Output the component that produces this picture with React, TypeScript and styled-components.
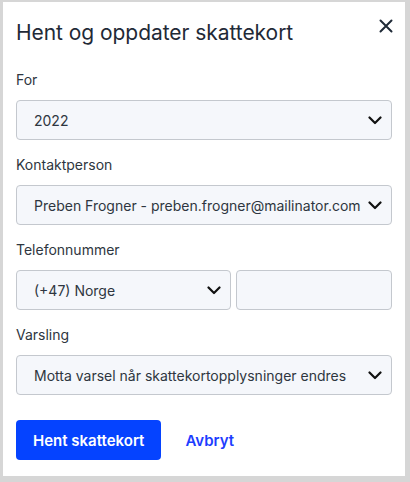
import React from "react";
import styled, { createGlobalStyle } from "styled-components";

const Global = createGlobalStyle`
  html, body { margin: 0; padding: 0; background: #d6d6d6; }
  body { font-family: Inter, "Noto Sans", sans-serif; }
  * { box-sizing: border-box; }
`;

const Frame = styled.div`
  width: 410px;
  height: 482px;
  padding: 2px 5px 6px 3px;
  background: #d6d6d6;
`;

const Card = styled.div`
  background: #fff;
  height: 100%;
  padding: 0 13px 0 13px;
  display: flex;
  flex-direction: column;
`;

const Header = styled.div`
  display: flex;
  justify-content: space-between;
  align-items: flex-start;
  padding-top: 18px;
`;

const Title = styled.h1`
  margin: 0;
  font-size: 21px;
  font-weight: 400;
  color: #1f2a37;
  line-height: 26px;
  letter-spacing: -0.05px;
`;

const Close = styled.button`
  border: none;
  background: none;
  padding: 0;
  margin: -6px -6px 0 0;
  width: 24px;
  height: 24px;
  display: flex;
  align-items: center;
  justify-content: center;
  color: #1f2a37;
  cursor: pointer;
`;

const Field = styled.div<{ $top: number }>`
  margin-top: ${(p) => p.$top}px;
  display: flex;
  flex-direction: column;
`;

const Label = styled.label`
  font-size: 14px;
  line-height: 18px;
  color: #2e3640;
  margin-bottom: 11px;
`;

const Box = styled.div<{ $w?: string }>`
  height: 40px;
  width: ${(p) => p.$w || "100%"};
  border: 1px solid #c4c8ce;
  border-radius: 4px;
  background: #f5f7fb;
  display: flex;
  align-items: center;
  padding: 0 9px 0 17px;
  font-size: 14px;
  color: #2e3640;
`;

const Value = styled.span`
  flex: 1;
  white-space: nowrap;
  overflow: hidden;
`;

const Row = styled.div`
  display: flex;
  gap: 5px;
`;

const Input = styled.div`
  flex: 1;
  height: 40px;
  border: 1px solid #c4c8ce;
  border-radius: 4px;
  background: #f5f7fb;
`;

const Actions = styled.div`
  margin-top: 25px;
  display: flex;
  align-items: center;
  gap: 24px;
`;

const Primary = styled.button`
  height: 40px;
  padding: 0 17px;
  border: none;
  border-radius: 4px;
  background: #0543ff;
  color: #fff;
  font-family: inherit;
  font-size: 15px;
  font-weight: 600;
`;

const LinkBtn = styled.button`
  border: none;
  background: none;
  padding: 0;
  color: #1d3dff;
  font-family: inherit;
  font-size: 15px;
  font-weight: 600;
`;

const Chevron = () => (
  <svg width="14" height="14" viewBox="0 0 14 14" fill="none">
    <path d="M1.5 4.5l5.5 5.5 5.5-5.5" stroke="#111" strokeWidth="2.2" strokeLinecap="round" strokeLinejoin="round" />
  </svg>
);

const Select = ({ value, w }: { value: string; w?: string }) => (
  <Box $w={w}>
    <Value>{value}</Value>
    <Chevron />
  </Box>
);

export default function App() {
  return (
    <>
      <Global />
      <Frame>
        <Card>
          <Header>
            <Title>Hent og oppdater skattekort</Title>
            <Close aria-label="Lukk">
              <svg width="14" height="14" viewBox="0 0 14 14">
                <path d="M1.5 1.5l11 11M12.5 1.5l-11 11" stroke="#1f2a37" strokeWidth="2" strokeLinecap="round" />
              </svg>
            </Close>
          </Header>
          <Field $top={25}>
            <Label>For</Label>
            <Select value="2022" />
          </Field>
          <Field $top={16}>
            <Label>Kontaktperson</Label>
            <Select value="Preben Frogner - preben.frogner@mailinator.com" />
          </Field>
          <Field $top={16}>
            <Label>Telefonnummer</Label>
            <Row>
              <Select value="(+47) Norge" w="215px" />
              <Input />
            </Row>
          </Field>
          <Field $top={16}>
            <Label>Varsling</Label>
            <Select value="Motta varsel når skattekortopplysninger endres" />
          </Field>
          <Actions>
            <Primary>Hent skattekort</Primary>
            <LinkBtn>Avbryt</LinkBtn>
          </Actions>
        </Card>
      </Frame>
    </>
  );
}
